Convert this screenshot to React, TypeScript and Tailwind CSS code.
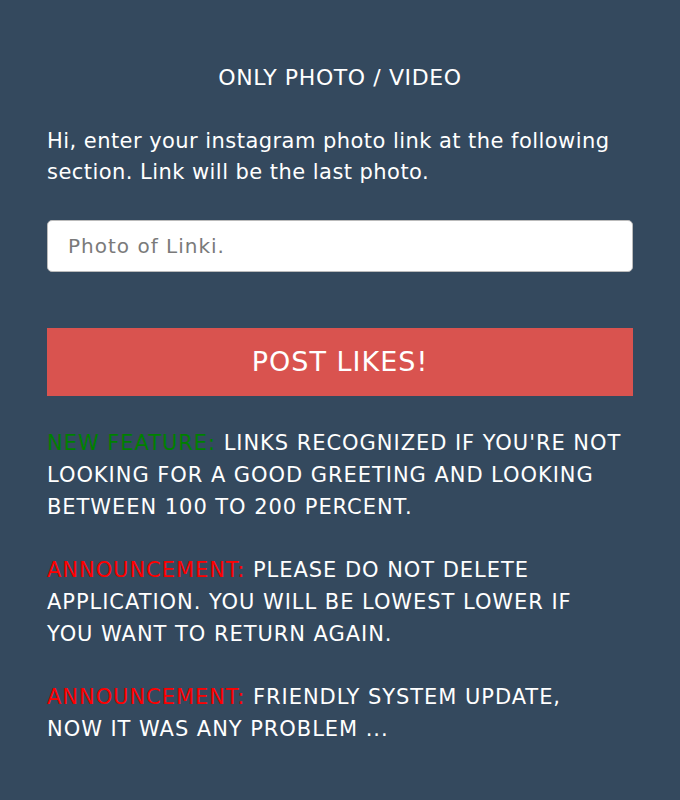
export default function App() {
  return (
    <div className="min-h-[800px] w-full bg-[#34495e] px-[47px] pt-[64px] pb-10 text-white font-['DejaVu_Sans',sans-serif]">
      <h2 className="text-center text-[22px] leading-[28px] tracking-[0.6px] font-normal">ONLY PHOTO / VIDEO</h2>

      <p className="mt-[34px] text-[21px] leading-[31px] tracking-[0.45px]">
        Hi, enter your instagram photo link at the following section. Link will be the last photo.
      </p>

      <input
        type="text"
        placeholder="Photo of Linki."
        className="mt-[32px] block h-[52px] w-full rounded-[5px] border border-[#bbb] bg-white px-[20px] text-[20px] tracking-[1px] text-[#555] placeholder:text-[#7a7a7a] outline-none"
      />

      <button className="mt-[56px] block h-[68px] w-full bg-[#d9534f] text-[27px] tracking-[1px] text-white">
        POST LIKES!
      </button>

      <div className="mt-[31px] pr-[8px] space-y-[31px] text-[21px] leading-[32px] tracking-[0.95px] uppercase">
        <p>
          <span className="text-[#008000]">New feature: </span>
          Links recognized if you're not looking for a good greeting and looking between 100 to 200 percent.
        </p>
        <p>
          <span className="text-[#ff0000]">Announcement: </span>
          Please do not delete application. You will be lowest lower if you want to return again.
        </p>
        <p>
          <span className="text-[#ff0000]">Announcement: </span>
          Friendly system update,
          <br />
          now it was any problem ...
        </p>
      </div>
    </div>
  );
}
